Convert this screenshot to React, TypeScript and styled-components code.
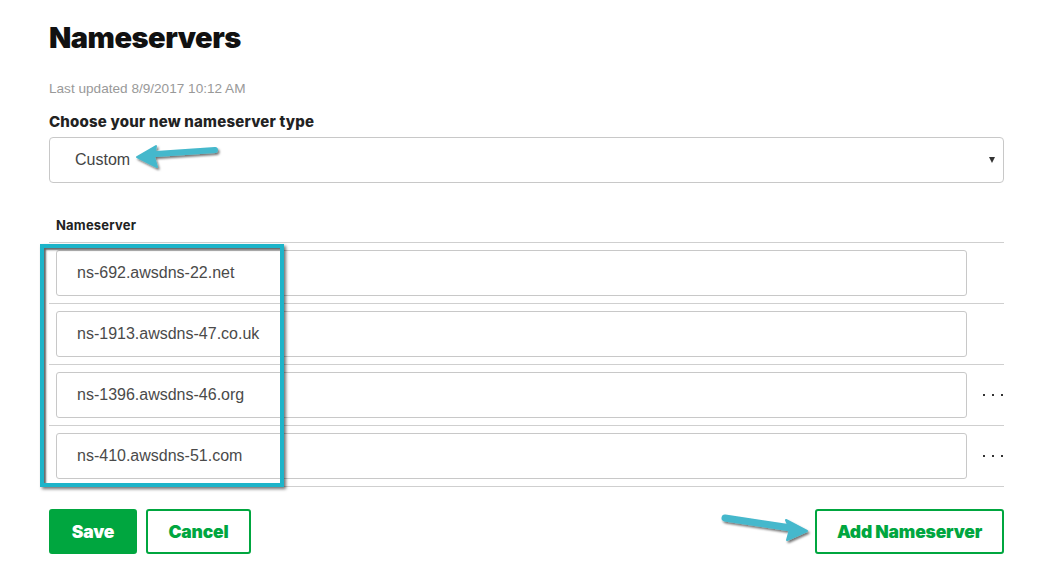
import React from "react";
import styled, { createGlobalStyle } from "styled-components";

const Global = createGlobalStyle`
  html, body { margin: 0; padding: 0; background: #fff; }
  body { font-family: "Liberation Sans", Arial, sans-serif; }
`;

const Page = styled.div`
  position: relative;
  width: 955px;
  padding: 20px 0 0 49px;
`;

const Title = styled.h1`
  margin: 0;
  font-family: Inter, "DejaVu Sans", sans-serif;
  font-weight: 900;
  font-size: 29px;
  line-height: 36px;
  letter-spacing: -0.5px;
  color: #111;
`;

const Updated = styled.div`
  margin-top: 25px;
  font-size: 13.6px;
  line-height: 16px;
  color: #999;
`;

const Label = styled.div`
  margin-top: 16px;
  font-family: Inter, "DejaVu Sans", sans-serif;
  font-weight: 800;
  font-size: 15px;
  line-height: 18px;
  letter-spacing: 0.2px;
  color: #222;
`;

const Select = styled.div`
  margin-top: 6px;
  height: 44px;
  border: 1px solid #c8c8c8;
  border-radius: 4px;
  display: flex;
  align-items: center;
  justify-content: space-between;
  padding: 0 8px 0 25px;
  font-size: 16px;
  color: #444;
`;

const Caret = styled.span`
  width: 0;
  height: 0;
  border-left: 3px solid transparent;
  border-right: 3px solid transparent;
  border-top: 6px solid #333;
`;

const TableHead = styled.div`
  margin-top: 34px;
  padding: 0 0 9px 7px;
  border-bottom: 1px solid #cfcfcf;
  font-family: Inter, "DejaVu Sans", sans-serif;
  font-weight: 700;
  font-size: 13px;
  line-height: 16px;
  letter-spacing: 0.2px;
  color: #222;
`;

const Row = styled.div`
  display: grid;
  grid-template-columns: 911px 1fr;
  align-items: center;
  height: 60px;
  padding-left: 7px;
  border-bottom: 1px solid #cfcfcf;
`;

const Field = styled.div`
  height: 44px;
  border: 1px solid #c8c8c8;
  border-radius: 3px;
  display: flex;
  align-items: center;
  padding-left: 20px;
  font-size: 16px;
  color: #4a4a4a;
`;

const Dots = styled.div`
  justify-self: end;
  display: flex;
  gap: 7px;
  padding-right: 1px;
  span {
    width: 2px;
    height: 2px;
    background: #333;
  }
`;

const Actions = styled.div`
  margin-top: 22px;
  display: flex;
  align-items: center;
  gap: 9px;
`;

const Button = styled.button<{ $primary?: boolean; $w: number }>`
  width: ${(p) => p.$w}px;
  height: 45px;
  border: 2px solid #00a63f;
  border-radius: 3px;
  background: ${(p) => (p.$primary ? "#00a63f" : "#fff")};
  color: ${(p) => (p.$primary ? "#fff" : "#00a63f")};
  font-family: Inter, "DejaVu Sans", sans-serif;
  font-weight: 900;
  font-size: 17.5px;
  letter-spacing: -0.2px;
  padding: 0;
  cursor: pointer;
`;

const Spacer = styled.div`
  flex: 1;
`;

const Highlight = styled.div`
  position: absolute;
  left: 40px;
  top: 244px;
  width: 236px;
  height: 235px;
  border: 4px solid #1db4c9;
  box-shadow: inset 2px 2px 2px rgba(0, 0, 0, 0.6), 2px 2px 3px rgba(0, 0, 0, 0.55);
  pointer-events: none;
`;

const ArrowSvg = styled.svg<{ $x: number; $y: number }>`
  position: absolute;
  left: ${(p) => p.$x}px;
  top: ${(p) => p.$y}px;
  overflow: visible;
  pointer-events: none;
`;

const servers = [
  { name: "ns-692.awsdns-22.net", more: false },
  { name: "ns-1913.awsdns-47.co.uk", more: false },
  { name: "ns-1396.awsdns-46.org", more: true },
  { name: "ns-410.awsdns-51.com", more: true },
];

export default function App() {
  return (
    <>
      <Global />
      <Page>
        <Title>Nameservers</Title>
        <Updated>Last updated 8/9/2017 10:12 AM</Updated>
        <Label>Choose your new nameserver type</Label>
        <Select>
          <span>Custom</span>
          <Caret />
        </Select>
        <TableHead>Nameserver</TableHead>
        {servers.map((s) => (
          <Row key={s.name}>
            <Field>{s.name}</Field>
            {s.more ? (
              <Dots>
                <span />
                <span />
                <span />
              </Dots>
            ) : (
              <div />
            )}
          </Row>
        ))}
        <Actions>
          <Button $primary $w={88}>Save</Button>
          <Button $w={105}>Cancel</Button>
          <Spacer />
          <Button $w={189}>Add Nameserver</Button>
        </Actions>
      </Page>
      <Highlight />
      <ArrowSvg $x={134} $y={141} width="90" height="30" viewBox="0 0 90 30">
        <defs>
          <filter id="sh1" x="-20%" y="-40%" width="150%" height="200%">
            <feDropShadow dx="1.5" dy="2" stdDeviation="1.2" floodColor="#000" floodOpacity="0.55" />
          </filter>
        </defs>
        <g filter="url(#sh1)" fill="#45b8cc" stroke="#45b8cc" strokeLinejoin="round">
          <path d="M22 13 L81 9" strokeWidth="6" strokeLinecap="round" fill="none" />
          <path d="M3 16 L22 5 L20 16 L23 26 Z" strokeWidth="2" />
        </g>
      </ArrowSvg>
      <ArrowSvg $x={718} $y={510} width="95" height="36" viewBox="0 0 95 36">
        <defs>
          <filter id="sh2" x="-20%" y="-40%" width="150%" height="200%">
            <feDropShadow dx="1.5" dy="2" stdDeviation="1.2" floodColor="#000" floodOpacity="0.55" />
          </filter>
        </defs>
        <g filter="url(#sh2)" fill="#45b8cc" stroke="#45b8cc" strokeLinejoin="round">
          <path d="M7 8 L73 18" strokeWidth="7" strokeLinecap="round" fill="none" />
          <path d="M89 21 L68 10 L72 19 L69 30 Z" strokeWidth="2" />
        </g>
      </ArrowSvg>
    </>
  );
}
